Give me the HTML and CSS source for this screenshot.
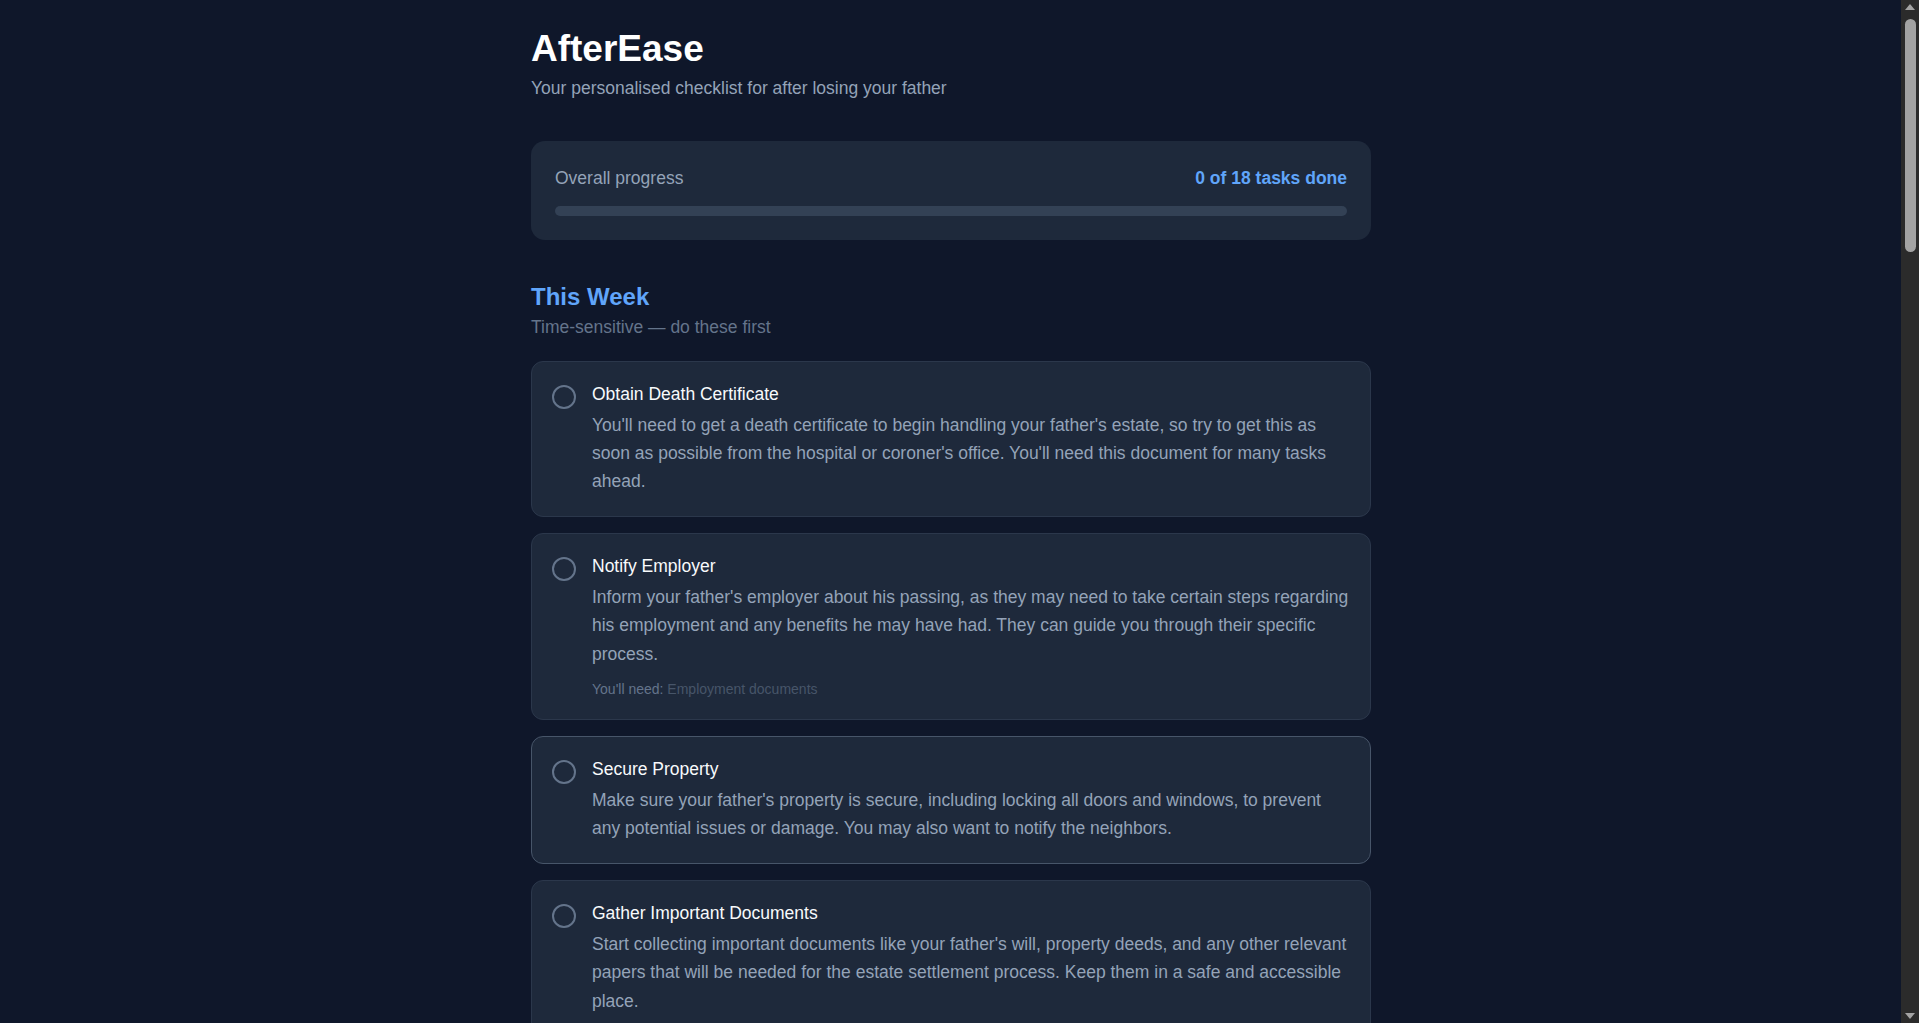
FILE: index.html
```html
<!DOCTYPE html>
<html lang="en">
<head>
    <meta charset="UTF-8">
    <meta name="viewport" content="width=device-width, initial-scale=1.0">
    <title>AfterEase - Your Checklist</title>
    <link rel="stylesheet" href="styles.css">
</head>
<body>
    <!-- page scrollbar, drawn so the gutter matches the desktop browser -->
    <div class="scrollbar" aria-hidden="true">
        <span class="arrow arrow-up"></span>
        <span class="thumb"></span>
        <span class="arrow arrow-down"></span>
    </div>

    <div class="container">
        <h1>AfterEase</h1>
        <p class="subtitle">Your personalised checklist for after losing your father</p>

        <div class="progress-card">
            <div class="progress-head">
                <span>Overall progress</span>
                <span class="progress-count">0 of 18 tasks done</span>
            </div>
            <div class="progress-track">
                <div class="progress-fill" style="width: 0%"></div>
            </div>
        </div>

        <div class="section">
            <h2>This Week</h2>
            <p class="section-note">Time-sensitive — do these first</p>
            <ul class="task-list">
                <li class="task-card">
                    <button class="check" aria-label="Mark as done"></button>
                    <div class="task-body">
                        <h3 class="task-title">Obtain Death Certificate</h3>
                        <p class="task-desc">You'll need to get a death certificate to begin handling your father's estate, so try to get this as soon as possible from the hospital or coroner's office. You'll need this document for many tasks ahead.</p>
                    </div>
                </li>
                <li class="task-card">
                    <button class="check" aria-label="Mark as done"></button>
                    <div class="task-body">
                        <h3 class="task-title">Notify Employer</h3>
                        <p class="task-desc">Inform your father's employer about his passing, as they may need to take certain steps regarding his employment and any benefits he may have had. They can guide you through their specific process.</p>
                        <p class="task-need">You'll need: <span>Employment documents</span></p>
                    </div>
                </li>
                <li class="task-card hovered">
                    <button class="check" aria-label="Mark as done"></button>
                    <div class="task-body">
                        <h3 class="task-title">Secure Property</h3>
                        <p class="task-desc">Make sure your father's property is secure, including locking all doors and windows, to prevent any potential issues or damage. You may also want to notify the neighbors.</p>
                    </div>
                </li>
                <li class="task-card">
                    <button class="check" aria-label="Mark as done"></button>
                    <div class="task-body">
                        <h3 class="task-title">Gather Important Documents</h3>
                        <p class="task-desc">Start collecting important documents like your father's will, property deeds, and any other relevant papers that will be needed for the estate settlement process. Keep them in a safe and accessible place.</p>
                        <p class="task-need">You'll need: <span>Will, property deeds, bank statements</span></p>
                    </div>
                </li>
                <li class="task-card">
                    <button class="check" aria-label="Mark as done"></button>
                    <div class="task-body">
                        <h3 class="task-title">Contact a Funeral Director</h3>
                        <p class="task-desc">Choose a funeral director to help arrange the funeral. They can take care of many of the practical details and explain the options that are available to you and your family, including costs and timings.</p>
                    </div>
                </li>
                <li class="task-card">
                    <button class="check" aria-label="Mark as done"></button>
                    <div class="task-body">
                        <h3 class="task-title">Register the Death</h3>
                        <p class="task-desc">Register the death with the local register office, usually within five days. The registrar will give you the certificates and forms that you will need for the next steps.</p>
                        <p class="task-need">You'll need: <span>Medical certificate of cause of death</span></p>
                    </div>
                </li>
            </ul>
        </div>

        <div class="section">
            <h2>This Month</h2>
            <p class="section-note">Important, but a little less urgent</p>
            <ul class="task-list">
                <li class="task-card">
                    <button class="check" aria-label="Mark as done"></button>
                    <div class="task-body">
                        <h3 class="task-title">Notify Banks and Building Societies</h3>
                        <p class="task-desc">Let your father's banks know about his passing so they can freeze his accounts and explain how funds will be released to the estate. Ask for a statement of the balance on the date of death.</p>
                        <p class="task-need">You'll need: <span>Death certificate, account details</span></p>
                    </div>
                </li>
                <li class="task-card">
                    <button class="check" aria-label="Mark as done"></button>
                    <div class="task-body">
                        <h3 class="task-title">Contact Pension Providers</h3>
                        <p class="task-desc">Inform any pension providers about his passing. There may be payments due to the estate, or benefits available to a surviving spouse or dependants that you should ask about.</p>
                        <p class="task-need">You'll need: <span>Pension reference numbers</span></p>
                    </div>
                </li>
                <li class="task-card">
                    <button class="check" aria-label="Mark as done"></button>
                    <div class="task-body">
                        <h3 class="task-title">Cancel Subscriptions and Direct Debits</h3>
                        <p class="task-desc">Go through recent bank statements and cancel any regular payments such as memberships, magazines and streaming services, so that nothing keeps being charged to his accounts.</p>
                    </div>
                </li>
                <li class="task-card">
                    <button class="check" aria-label="Mark as done"></button>
                    <div class="task-body">
                        <h3 class="task-title">Inform Insurance Companies</h3>
                        <p class="task-desc">Contact his life, home and car insurers. Keep cover in place on the property until it is sold or transferred, as an empty home may need a different kind of policy.</p>
                        <p class="task-need">You'll need: <span>Policy numbers</span></p>
                    </div>
                </li>
                <li class="task-card">
                    <button class="check" aria-label="Mark as done"></button>
                    <div class="task-body">
                        <h3 class="task-title">Redirect Post</h3>
                        <p class="task-desc">Set up a mail redirection so that letters and bills reach you, and you don't miss anything important from banks, utility companies or government offices.</p>
                    </div>
                </li>
                <li class="task-card">
                    <button class="check" aria-label="Mark as done"></button>
                    <div class="task-body">
                        <h3 class="task-title">Return Official Documents</h3>
                        <p class="task-desc">Return or cancel your father's passport, driving licence and other official documents with the relevant offices. Some services let you do this in one go when you register the death.</p>
                        <p class="task-need">You'll need: <span>Passport, driving licence</span></p>
                    </div>
                </li>
            </ul>
        </div>

        <div class="section">
            <h2>Next Few Months</h2>
            <p class="section-note">Take these at your own pace</p>
            <ul class="task-list">
                <li class="task-card">
                    <button class="check" aria-label="Mark as done"></button>
                    <div class="task-body">
                        <h3 class="task-title">Apply for Probate</h3>
                        <p class="task-desc">If it is needed, apply for probate so that the executor can deal with your father's money, property and possessions. A solicitor can help if the estate is complicated.</p>
                        <p class="task-need">You'll need: <span>Original will, estate valuation</span></p>
                    </div>
                </li>
                <li class="task-card">
                    <button class="check" aria-label="Mark as done"></button>
                    <div class="task-body">
                        <h3 class="task-title">Value the Estate</h3>
                        <p class="task-desc">Work out the value of the estate, including property, savings, investments and belongings, minus any debts. This figure decides whether any inheritance tax is due.</p>
                        <p class="task-need">You'll need: <span>Valuations, statements</span></p>
                    </div>
                </li>
                <li class="task-card">
                    <button class="check" aria-label="Mark as done"></button>
                    <div class="task-body">
                        <h3 class="task-title">Settle Debts and Taxes</h3>
                        <p class="task-desc">Pay any outstanding debts, bills and taxes from the estate before distributing what remains. Keep a clear record of every payment you make on behalf of the estate.</p>
                    </div>
                </li>
                <li class="task-card">
                    <button class="check" aria-label="Mark as done"></button>
                    <div class="task-body">
                        <h3 class="task-title">Distribute the Estate</h3>
                        <p class="task-desc">Share out the estate according to the will, or the rules of intestacy if there is no will. Ask each beneficiary to sign a receipt for what they have been given.</p>
                        <p class="task-need">You'll need: <span>Final estate accounts</span></p>
                    </div>
                </li>
                <li class="task-card">
                    <button class="check" aria-label="Mark as done"></button>
                    <div class="task-body">
                        <h3 class="task-title">Close Online Accounts</h3>
                        <p class="task-desc">Memorialise or close his email and social media accounts, and download any photos or messages you would like to keep before they are removed.</p>
                    </div>
                </li>
                <li class="task-card">
                    <button class="check" aria-label="Mark as done"></button>
                    <div class="task-body">
                        <h3 class="task-title">Look After Yourself</h3>
                        <p class="task-desc">Grief takes time, and there is no right way to feel. Reach out to friends, family or a bereavement service whenever you need someone to talk to.</p>
                    </div>
                </li>
            </ul>
        </div>

        <p class="footer-note">Take it one step at a time. Your progress is saved on this device.</p>
    </div>
</body>
</html>
```

FILE: styles.css
```css
body {
    margin: 0;
    padding-right: 17px;
    background-color: #0f172a;
    font-family: "Liberation Sans", Arial, sans-serif;
    color: #e2e8f0;
}
.scrollbar {
    position: fixed;
    top: 0;
    right: 0;
    bottom: 0;
    width: 18px;
    display: flex;
    flex-direction: column;
    align-items: center;
    background-color: #2b2b2b;
    z-index: 10;
}
.arrow {
    width: 0;
    height: 0;
    border-left: 5px solid transparent;
    border-right: 5px solid transparent;
}
.arrow-up {
    margin-top: 4px;
    border-bottom: 6px solid #a3a3a3;
}
.arrow-down {
    margin-top: auto;
    margin-bottom: 4px;
    border-top: 6px solid #a3a3a3;
}
.thumb {
    width: 11px;
    height: 233px;
    margin-top: 9px;
    border-radius: 6px;
    background-color: #a3a3a3;
}
.container {
    max-width: 840px;
    margin: 0 auto;
    padding: 27px 0 120px;
}
h1 {
    margin: 0;
    font-size: 37px;
    line-height: 44px;
    font-weight: bold;
    color: #fff;
}
.subtitle {
    margin: 3px 0 0;
    font-size: 17.5px;
    line-height: 28px;
    color: #94a3b8;
}
.progress-card {
    margin-top: 39px;
    padding: 24px;
    background-color: #1e293b;
    border-radius: 14px;
}
.progress-head {
    display: flex;
    justify-content: space-between;
    font-size: 17.5px;
    line-height: 26px;
    color: #94a3b8;
}
.progress-count {
    color: #60a5fa;
    font-weight: bold;
}
.progress-track {
    margin-top: 15px;
    height: 10px;
    border-radius: 5px;
    background-color: #334155;
    overflow: hidden;
}
.progress-fill {
    height: 100%;
    background-color: #60a5fa;
}
.section {
    margin-top: 41px;
}
.section h2 {
    margin: 0;
    font-size: 24px;
    line-height: 32px;
    color: #60a5fa;
}
.section-note {
    margin: 0;
    font-size: 17.5px;
    line-height: 28px;
    color: #64748b;
}
.task-list {
    list-style: none;
    margin: 20px 0 0;
    padding: 0;
    display: flex;
    flex-direction: column;
    gap: 16.5px;
}
.task-card {
    display: flex;
    align-items: flex-start;
    gap: 16px;
    padding: 20px;
    background-color: #1e293b;
    border: 1px solid #2b374b;
    border-radius: 12px;
}
.task-card:hover,
.task-card.hovered {
    border-color: #475569;
}
.check {
    flex: none;
    box-sizing: border-box;
    width: 24px;
    height: 24px;
    margin-top: 3px;
    padding: 0;
    border: 2px solid #64748b;
    border-radius: 50%;
    background: none;
    cursor: pointer;
}
.task-body {
    flex: 1;
}
.task-title {
    margin: 0;
    font-size: 17.5px;
    line-height: 24px;
    font-weight: 500;
    color: #f8fafc;
}
.task-desc {
    margin: 5px 0 0;
    font-size: 17.5px;
    line-height: 28.2px;
    color: #94a3b8;
}
.task-need {
    margin: 11px 0 0;
    font-size: 14px;
    line-height: 20px;
    color: #64748b;
}
.task-need span {
    color: #475569;
}
.footer-note {
    margin: 48px 0 0;
    text-align: center;
    font-size: 15px;
    color: #475569;
}
```
